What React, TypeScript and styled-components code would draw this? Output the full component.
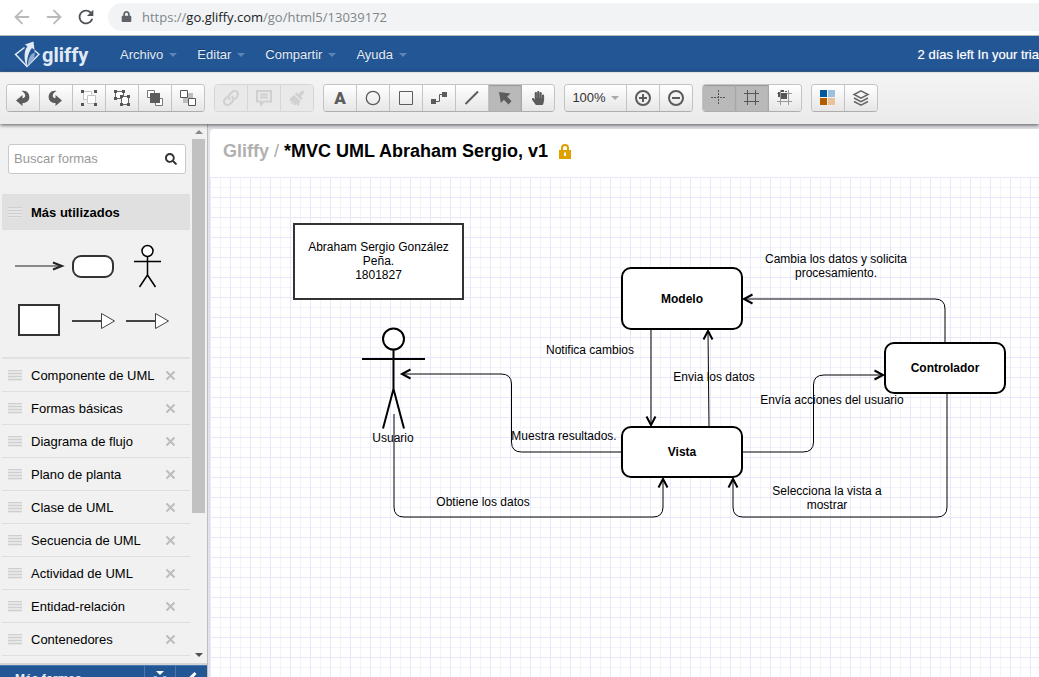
import React from "react";
import styled, { createGlobalStyle, css } from "styled-components";
import { ArrowLeft, ArrowRight } from "lucide-react";
import { FaHandPaper, FaLock, FaSearch } from "react-icons/fa";
import { MdRefresh } from "react-icons/md";

const GlobalStyle = createGlobalStyle`
  * { box-sizing: border-box; }
  body { margin: 0; overflow: hidden; font-family: "Liberation Sans", Arial, sans-serif; font-size: 13px; color: #000; }
  button { font: inherit; color: inherit; padding: 0; margin: 0; border: 0; background: none; cursor: pointer; }
  svg { display: block; }
`;

const Page = styled.div`
  display: flex;
  flex-direction: column;
  height: 100vh;
  background: #fff;
`;

/* Browser chrome */

const BrowserBar = styled.div`
  flex: none;
  display: flex;
  align-items: center;
  height: 36px;
  padding: 0 0 2px 12px;
  background: #fff;
  border-bottom: 1px solid #b6babd;
`;

const NavButton = styled.button<{ $dim?: boolean }>`
  display: flex;
  justify-content: center;
  width: 20px;
  margin-right: 12px;
  color: ${(p) => (p.$dim ? "#bababa" : "#4f5256")};
  svg { flex: none; }
`;

const AddressPill = styled.div`
  flex: 1;
  display: flex;
  align-items: center;
  gap: 10px;
  height: 28px;
  padding-left: 13px;
  background: #f1f3f4;
  border-radius: 14px 0 0 14px;
  color: #5f6368;
  font: 13px/20px "Open Sans", "Noto Sans", sans-serif;

  span { color: #80868b; }
  b { font-weight: 400; color: #202124; }
`;

/* Application header */

const Header = styled.header`
  flex: none;
  display: flex;
  align-items: center;
  height: 36px;
  padding: 2px 0 0 14px;
  background: #225695;
  border-bottom: 1px solid #3f689b;
  overflow: hidden;
`;

const Logo = styled.a`
  display: flex;
  align-items: center;
  gap: 2px;
  width: 106px;
  color: #e1eaf4;
  text-decoration: none;
  font: bold 20px/28px Roboto, "Liberation Sans", sans-serif;
`;

const MenuBar = styled.nav`
  flex: 1;
  display: flex;
  gap: 20px;
`;

const MenuItem = styled.button`
  display: flex;
  align-items: center;
  gap: 6px;
  line-height: 16px;
  color: #e3ecf5;
  text-shadow: 0 -1px 0 #173f70;
`;

const Caret = styled.span<{ $color: string }>`
  border: 4px solid transparent;
  border-top-color: ${(p) => p.$color};
  border-bottom-width: 0;
`;

const Trial = styled.span`
  white-space: nowrap;
  color: #fff;
  text-shadow: 0 0 1px rgba(255, 255, 255, 0.5);
`;

/* Toolbar */

const Toolbar = styled.div`
  flex: none;
  position: relative;
  z-index: 1;
  display: flex;
  align-items: center;
  gap: 9px;
  height: 52px;
  padding: 0 6px 2px;
  background: linear-gradient(#f4f4f4, #ebebeb);
  border-top: 1px solid #e2e2e2;
  box-shadow: 0 1px 4px rgba(0, 0, 0, 0.65);
`;

const ToolGroup = styled.div<{ $disabled?: boolean }>`
  display: flex;
  height: 28px;
  border: 1px solid ${(p) => (p.$disabled ? "#d6d6d6" : "#c4c4c4")};
  border-bottom-color: ${(p) => (p.$disabled ? "#d6d6d6" : "#adadad")};
  border-radius: 4px;
  overflow: hidden;
`;

const ToolButton = styled.button<{ $active?: boolean; $wide?: boolean }>`
  display: flex;
  align-items: center;
  justify-content: center;
  gap: 5px;
  width: ${(p) => (p.$wide ? 62 : 33)}px;
  color: #5c5c5c;
  background: linear-gradient(#fff, #e6e6e6);
  border-right: 1px solid #c4c4c4;

  &:last-child { width: 32px; border-right: 0; }
  &:disabled { color: #d0d0d0; background: #e9e9e9; border-color: #d6d6d6; }

  ${(p) =>
    p.$active &&
    css`
      background: #b9b9b9;
      border-color: #a6a6a6;
      box-shadow: inset 0 1px 1px #999;
    `}
`;

const LetterA = styled.span`
  font: 900 17px/20px Roboto, "Liberation Sans", sans-serif;
`;

const ZoomValue = styled.span`
  font-size: 13px;
  color: #333;
`;

/* Body */

const Body = styled.div`
  flex: 1;
  min-height: 0;
  display: flex;
  background: #e2e2e8;
`;

const Sidebar = styled.aside`
  flex: none;
  display: flex;
  flex-direction: column;
  width: 208px;
  background: #f1f1f1;
  border-right: 1px solid #bdbdbd;
`;

const Library = styled.div`
  flex: 1;
  min-height: 0;
  display: flex;
  overflow: hidden;
`;

const LibraryContent = styled.div`
  flex: 1;
  min-width: 0;
  padding: 20px 0 0 2px;
`;

const SearchBox = styled.label`
  display: flex;
  align-items: center;
  height: 30px;
  margin: 0 4px 20px 6px;
  padding: 0 8px 1px 5px;
  background: #fff;
  border: 1px solid #c9c9c9;
  border-radius: 3px;
  color: #333;

  input {
    flex: 1;
    min-width: 0;
    padding: 0;
    border: 0;
    outline: 0;
    background: none;
    font: inherit;
  }
  input::placeholder { color: #999; opacity: 1; }
`;

const Grip = styled.span`
  flex: none;
  width: 14px;
  height: 11px;
  margin-right: 9px;
  background: repeating-linear-gradient(#cfcfcf 0 1px, #e6e6e6 1px 3px);
`;

const SectionTitle = styled.h2`
  display: flex;
  align-items: center;
  height: 36px;
  margin: 0;
  padding-left: 6px;
  background: #e0e0e0;
  font-size: 13px;
`;

const Palette = styled.div`
  display: grid;
  grid-template-columns: repeat(3, 54px);
  grid-auto-rows: 54px;
  padding: 9px 0 10px 10px;
`;

const Rows = styled.ul`
  margin: 0;
  padding: 0;
  list-style: none;
  border-top: 2px solid #e2e2e2;
`;

const Row = styled.li`
  display: flex;
  align-items: center;
  height: 33px;
  padding: 0 14px 0 6px;
  border-bottom: 1px solid #dfdfdf;
  span:nth-child(2) { flex: 1; }
`;

const ScrollTrack = styled.div`
  flex: none;
  display: flex;
  flex-direction: column;
  align-items: center;
  width: 17px;
  padding: 6px 0;
`;

const ScrollThumb = styled.div`
  flex: 0 0 71%;
  width: 13px;
  margin-top: 5px;
  background: #c1c1c1;
`;

const ScrollArrow = styled.span<{ $up?: boolean }>`
  border: 4px solid transparent;
  ${(p) =>
    p.$up
      ? "border-bottom-color: #8a8a8a; border-top-width: 0;"
      : "border-top-color: #505050; border-bottom-width: 0; margin-top: auto;"}
`;

const SidebarFooter = styled.footer`
  flex: 0 0 14px;
  display: flex;
  align-items: flex-start;
  border-top: 2px solid #d4d4d4;
  overflow: hidden;
  background: #225695;
`;

const FooterButton = styled.button<{ $grow?: boolean }>`
  flex: ${(p) => (p.$grow ? "1" : "0 0 31px")};
  display: flex;
  justify-content: ${(p) => (p.$grow ? "flex-start" : "center")};
  align-items: center;
  height: 27px;
  padding-left: ${(p) => (p.$grow ? 15 : 0)}px;
  border-top: 1px solid #4a77ad;
  border-right: 1px solid #4a77ad;
  color: #e3ecf5;
  font-size: 12px;
  font-weight: bold;
  &:last-child { border-right: 0; }
`;

const Document = styled.main`
  flex: 1;
  min-width: 0;
  display: flex;
  flex-direction: column;
  margin: 5px 0 0 2px;
  background: #fff;
  border-radius: 4px 0 0 0;
`;

const DocumentTitle = styled.h1`
  flex: none;
  display: flex;
  align-items: center;
  gap: 5px;
  height: 48px;
  margin: 0;
  padding: 0 0 4px 13px;
  font-size: 18px;
  white-space: nowrap;

  a { color: #b0b0b0; text-decoration: none; }
  i { color: #aaa; font-style: normal; font-weight: 400; }
  svg { margin-left: 6px; }
`;

/* Free drawing surface: nodes and labels sit at their own coordinates. */
const Stage = styled.section`
  flex: 1;
  position: relative;
  overflow: hidden;
  background-color: #fff;
  background-image:
    linear-gradient(#e8e8fd 1px, transparent 1px),
    linear-gradient(90deg, #e8e8fd 1px, transparent 1px),
    linear-gradient(#f3f3fc 1px, transparent 1px),
    linear-gradient(90deg, #f3f3fc 1px, transparent 1px);
  background-size: 20px 20px, 20px 20px, 10px 10px, 10px 10px;
`;

const Connectors = styled.svg`
  position: absolute;
  left: 0;
  top: 0;
  overflow: visible;
`;

const Node = styled.div<{ $x: number; $y: number; $w: number; $h: number; $plain?: boolean }>`
  position: absolute;
  left: ${(p) => p.$x}px;
  top: ${(p) => p.$y}px;
  width: ${(p) => p.$w}px;
  height: ${(p) => p.$h}px;
  display: flex;
  align-items: center;
  justify-content: center;
  padding-bottom: ${(p) => (p.$plain ? 2 : 0)}px;
  background: #fff;
  border: 2px solid ${(p) => (p.$plain ? "#333" : "#000")};
  border-radius: ${(p) => (p.$plain ? 0 : 10)}px;
  font-size: 12px;
  line-height: 14px;
  font-weight: ${(p) => (p.$plain ? 400 : 700)};
  text-align: center;
  white-space: pre;
`;

const Label = styled.div<{ $x: number; $y: number }>`
  position: absolute;
  left: ${(p) => p.$x - 80}px;
  top: ${(p) => p.$y}px;
  width: 160px;
  font-size: 12px;
  line-height: 14px;
  text-align: center;
  white-space: pre;
`;

const ToolIcon = ({ children }: { children: React.ReactNode }) => (
  <svg width="32" height="26" viewBox="0 0 32 26" fill="none" aria-hidden="true">
    {children}
  </svg>
);

const undoPath =
  "M9 15.5 L15.5 10 V13.3 C19.3 12.8 19.3 8.5 14.5 6 C20 5 22.8 9 22.3 13 C21.8 16.3 19 18 15.5 18 V21 Z";

const Handles = ({ at }: { at: [number, number][] }) => (
  <g fill="#555">
    {at.map(([x, y]) => (
      <rect key={`${x}-${y}`} x={x} y={y} width="3" height="3" />
    ))}
  </g>
);

type Tool = { name: string; icon: React.ReactNode; active?: boolean; wide?: boolean };
type Group = { disabled?: boolean; tools: Tool[] };

const magnifier = (
  <circle cx="16" cy="13" r="7" stroke="#5c5c5c" strokeWidth="2" />
);

const groups: Group[] = [
  {
    tools: [
      { name: "Deshacer", icon: <ToolIcon><path d={undoPath} fill="#5c5c5c" /></ToolIcon> },
      {
        name: "Rehacer",
        icon: <ToolIcon><path d={undoPath} fill="#5c5c5c" transform="matrix(-1 0 0 1 31 0)" /></ToolIcon>,
      },
      {
        name: "Agrupar",
        icon: (
          <ToolIcon>
            <g fill="#fff" stroke="#c6c6c6"><path d="M10.500 6.500h8v8h-8z" /><path d="M14.500 10.500h8v8h-8z" /></g>
            <Handles at={[[8, 5], [21, 5], [8, 18], [21, 18]]} />
          </ToolIcon>
        ),
      },
      {
        name: "Desagrupar",
        icon: (
          <ToolIcon>
            <g fill="#fff" stroke="#666"><path d="M9.500 6.500h8v7h-8z" /><path d="M15.500 11.500h7v8h-7z" /></g>
            <Handles at={[[8, 5], [16, 5], [8, 12], [14, 10], [21, 10], [14, 18], [21, 18]]} />
          </ToolIcon>
        ),
      },
      {
        name: "Traer al frente",
        icon: (
          <ToolIcon>
            <path d="M8.500 5.500h7v7h-7zM16.500 13.500h7v7h-7z" fill="#fff" stroke="#777" />
            <path d="M11 8h10v10H11z" fill="#5c5c5c" />
          </ToolIcon>
        ),
      },
      {
        name: "Enviar atrás",
        icon: (
          <ToolIcon>
            <path d="M11 8h10v10H11z" fill="#bdbdbd" />
            <path d="M8.500 5.500h7v7h-7zM16.500 13.500h7v7h-7z" fill="#fff" stroke="#555" />
          </ToolIcon>
        ),
      },
    ],
  },
  {
    disabled: true,
    tools: [
      {
        name: "Enlace",
        icon: (
          <ToolIcon>
            <g transform="rotate(-45 16 13)" stroke="#d0d0d0" strokeWidth="2">
              <path d="M14.500 9.500H11a3.500 3.500 0 0 0 0 7h3.500a3.500 3.500 0 0 0 3.200-4.500" />
              <path d="M17.500 16.500H21a3.500 3.500 0 0 0 0-7h-3.500a3.500 3.500 0 0 0-3.200 4.500" />
            </g>
          </ToolIcon>
        ),
      },
      {
        name: "Comentario",
        icon: (
          <ToolIcon>
            <path d="M9 6h14v10.500h-7l-3 3v-3H9zM12 9.500h8M12 12.500h8" stroke="#d0d0d0" strokeWidth="2" />
          </ToolIcon>
        ),
      },
      {
        name: "Copiar formato",
        icon: (
          <ToolIcon>
            <g fill="#d0d0d0">
              <path d="M21.500 5.300l2 1.800-3.700 4.600 1.700 1.700-1.500 1.600-6.200-5.900 1.600-1.500 2 1.600z" />
              <path d="M13 10l6 5.800-1 4.700-2.300 0 .8-2.500-2.300 2.300-2-.7 1.600-2.400-2.600 1.700-1.900-1.500 2.400-1.500-3 .1.200-2.400z" />
            </g>
          </ToolIcon>
        ),
      },
    ],
  },
  {
    tools: [
      { name: "Texto", icon: <LetterA>A</LetterA> },
      {
        name: "Elipse",
        icon: <ToolIcon><circle cx="16" cy="13" r="6.700" stroke="#5c5c5c" strokeWidth="1.300" /></ToolIcon>,
      },
      {
        name: "Rectángulo",
        icon: <ToolIcon><path d="M9.500 6.500h13v13h-13z" stroke="#5c5c5c" /></ToolIcon>,
      },
      {
        name: "Conector",
        icon: (
          <ToolIcon>
            <path d="M8 14h5v5H8zM19 7h5v5h-5z" fill="#5c5c5c" />
            <path d="M13 16.500h3.500v-7H19" stroke="#5c5c5c" />
          </ToolIcon>
        ),
      },
      {
        name: "Línea",
        icon: <ToolIcon><path d="M9.500 19 22 6.500" stroke="#5c5c5c" strokeWidth="2" /></ToolIcon>,
      },
      {
        name: "Seleccionar",
        active: true,
        icon: (
          <ToolIcon>
            <path d="M10 7l11.500 1.500-3.300 3.200 4.300 4.300-3 3.500-4.600-4.700-3 3.200z" fill="#5c5c5c" />
          </ToolIcon>
        ),
      },
      { name: "Mover", icon: <FaHandPaper size={14} /> },
    ],
  },
  {
    tools: [
      { name: "Nivel de zoom", wide: true, icon: <><ZoomValue>100%</ZoomValue><Caret $color="#aaa" /></> },
      {
        name: "Acercar",
        icon: <ToolIcon>{magnifier}<path d="M12 13h8M16 9v8" stroke="#5c5c5c" strokeWidth="2" /></ToolIcon>,
      },
      {
        name: "Alejar",
        icon: <ToolIcon>{magnifier}<path d="M12 13h8" stroke="#5c5c5c" strokeWidth="2" /></ToolIcon>,
      },
    ],
  },
  {
    tools: [
      {
        name: "Guías",
        active: true,
        icon: (
          <ToolIcon>
            <path d="M8 12.500h15M15.500 5v15" stroke="#555" strokeDasharray="2 1" />
          </ToolIcon>
        ),
      },
      {
        name: "Cuadrícula",
        active: true,
        icon: <ToolIcon><path d="M8 8.500h15M8 16.500h15M11.500 5v15M19.500 5v15" stroke="#555" /></ToolIcon>,
      },
      {
        name: "Ajustar a la cuadrícula",
        icon: (
          <ToolIcon>
            <path d="M8 8.500h15M8 16.500h15M11.500 5v15M19.500 5v15" stroke="#999" />
            <path d="M12 8h6v6h-6zM9 7h2v5H9zM12 5h3v2h-3zM16 6h2v1h-2z" fill="#555" />
          </ToolIcon>
        ),
      },
    ],
  },
  {
    tools: [
      {
        name: "Tema",
        icon: (
          <ToolIcon>
            <path d="M8 5h7v7H8z" fill="#015a9e" />
            <path d="M16 5h7v7h-7z" fill="#9cc1dc" />
            <path d="M8 13h7v7H8z" fill="#b65b00" />
            <path d="M16 13h7v7h-7z" fill="#e8c298" />
          </ToolIcon>
        ),
      },
      {
        name: "Capas",
        icon: (
          <ToolIcon>
            <g stroke="#666" strokeWidth="1.500">
              <path d="M16 5.800 23 9.500 16 13.200 9 9.500z" />
              <path d="M9 13l7 3.700 7-3.700M9 16.500l7 3.700 7-3.700" />
            </g>
          </ToolIcon>
        ),
      },
    ],
  },
];

const menus = ["Archivo", "Editar", "Compartir", "Ayuda"];

const libraries = [
  "Componente de UML",
  "Formas básicas",
  "Diagrama de flujo",
  "Plano de planta",
  "Clase de UML",
  "Secuencia de UML",
  "Actividad de UML",
  "Entidad-relación",
  "Contenedores",
];

const generalization = (
  <>
    <path d="M6 28h30" stroke="#444" strokeWidth="2" />
    <path d="M35.500 20.500v15l13-7.500z" fill="#fff" stroke="#444" />
  </>
);

const shapes: { name: string; drawing: React.ReactNode }[] = [
  {
    name: "Flecha",
    drawing: (
      <>
        <path d="M3 27h47" stroke="#666" strokeWidth="1.500" />
        <path d="M41 23.500l9 3.500-9 3.500" stroke="#222" strokeWidth="2" fill="none" />
      </>
    ),
  },
  {
    name: "Rectángulo redondeado",
    drawing: <rect x="7" y="17" width="40" height="21" rx="8" fill="#fff" stroke="#333" strokeWidth="2" />,
  },
  {
    name: "Actor",
    drawing: (
      <g stroke="#000" strokeWidth="1.500" fill="none">
        <circle cx="27.500" cy="12" r="5.500" fill="#fff" />
        <path d="M27.500 17.500V36M14 22.500h27M27.500 36l-8 12M27.500 36l8 12" />
      </g>
    ),
  },
  {
    name: "Rectángulo",
    drawing: <rect x="7" y="12" width="40" height="30" fill="#fff" stroke="#333" strokeWidth="2" />,
  },
  { name: "Generalización", drawing: generalization },
  { name: "Realización", drawing: generalization },
];

/* Connector routes and the arrow tips that end them, in stage coordinates. */
const routes = [
  "M411 275H311.500Q301.500 275 301.500 265V207Q301.500 197 291 197H193",
  "M184 237V330Q184 340 194 340H443Q453 340 453 330V303",
  "M441 153V248",
  "M499 249L498 155",
  "M533 275H593Q603.500 275 603.500 265V208Q603.500 198 614 198H673",
  "M735 165V132Q735 122 725 122H535",
  "M737 215V330Q737 340 727 340H533Q523 340 523 330V303",
];

const tips = [
  "M200.500 192.500L192 197L200.500 201.500",
  "M448.500 310.500L453 302L457.500 310.500",
  "M436.500 239.500L441 248L445.500 239.500",
  "M493.500 162.500L498 154L502.500 162.500",
  "M664.500 193.500L673 198L664.500 202.500",
  "M542.500 117.500L534 122L542.500 126.500",
  "M518.500 310.500L523 302L527.500 310.500",
];

const labels: { x: number; y: number; text: string }[] = [
  { x: 183, y: 254, text: "Usuario" },
  { x: 380, y: 166, text: "Notifica cambios" },
  { x: 504, y: 193, text: "Envia los datos" },
  { x: 622, y: 216, text: "Envía acciones del usuario" },
  { x: 354, y: 252, text: "Muestra resultados." },
  { x: 273, y: 318, text: "Obtiene los datos" },
  { x: 617, y: 307, text: "Selecciona la vista a\nmostrar" },
  { x: 626, y: 75, text: "Cambia los datos y solicita\nprocesamiento." },
];

const GliffyMark = () => (
  <svg width="26" height="28" viewBox="0 0 26 28" aria-hidden="true">
    <path d="M10.500 6.500 1.500 13.300 13 25.500 25 13.300 20.500 9.500" fill="none" stroke="#e1eaf4" strokeWidth="1.500" />
    <path d="M12.800 26C9.500 18 10 9 13.500 5.500L11 3.500 19.500.500 20.500 9 18 7C14.500 11 13 17 12.800 26z" fill="#e1eaf4" />
    <path d="M13.500 25C14 18 16 13 21 11.500L20 18z" fill="#8fadd0" />
  </svg>
);

export default function App() {
  return (
    <Page>
      <GlobalStyle />
      <BrowserBar>
        <NavButton $dim aria-label="Atrás"><ArrowLeft size={22} strokeWidth={2} /></NavButton>
        <NavButton $dim aria-label="Adelante"><ArrowRight size={22} strokeWidth={2} /></NavButton>
        <NavButton aria-label="Recargar"><MdRefresh size={22} /></NavButton>
        <AddressPill>
          <FaLock size={11} />
          <span>https://<b>go.gliffy.com</b>/go/html5/13039172</span>
        </AddressPill>
      </BrowserBar>

      <Header>
        <Logo href="#"><GliffyMark />gliffy</Logo>
        <MenuBar>
          {menus.map((m) => (
            <MenuItem key={m}>{m}<Caret $color="#5d86b8" /></MenuItem>
          ))}
        </MenuBar>
        <Trial>2 días left In your tria</Trial>
      </Header>

      <Toolbar role="toolbar">
        {groups.map((g, i) => (
          <ToolGroup key={i} $disabled={g.disabled}>
            {g.tools.map((t) => (
              <ToolButton key={t.name} aria-label={t.name} disabled={g.disabled} $active={t.active} $wide={t.wide}>
                {t.icon}
              </ToolButton>
            ))}
          </ToolGroup>
        ))}
      </Toolbar>

      <Body>
        <Sidebar>
          <Library>
            <LibraryContent>
              <SearchBox>
                <input type="text" placeholder="Buscar formas" aria-label="Buscar formas" />
                <FaSearch size={12} />
              </SearchBox>
              <SectionTitle><Grip />Más utilizados</SectionTitle>
              <Palette>
                {shapes.map((s) => (
                  <button key={s.name} aria-label={s.name}>
                    <svg width="54" height="54" viewBox="0 0 54 54" fill="none">{s.drawing}</svg>
                  </button>
                ))}
              </Palette>
              <Rows>
                {libraries.map((name) => (
                  <Row key={name}>
                    <Grip />
                    <span>{name}</span>
                    <button aria-label={`Cerrar ${name}`}>
                      <svg width="11" height="11" viewBox="0 0 11 11">
                        <path d="M1.500 1.500l8 8M9.500 1.500l-8 8" stroke="#bdbdbd" strokeWidth="2" />
                      </svg>
                    </button>
                  </Row>
                ))}
              </Rows>
            </LibraryContent>
            <ScrollTrack>
              <ScrollArrow $up />
              <ScrollThumb />
              <ScrollArrow />
            </ScrollTrack>
          </Library>
          <SidebarFooter>
            <FooterButton $grow>Más formas</FooterButton>
            <FooterButton aria-label="Importar">
              <svg width="14" height="16" viewBox="0 0 14 16" fill="none">
                <path d="M3 0h8L7 4z" fill="#fff" />
                <path d="M4 5.500H1V14h12V5.500h-3" stroke="#9db9d9" />
              </svg>
            </FooterButton>
            <FooterButton aria-label="Contraer">
              <svg width="10" height="16" viewBox="0 0 10 16" fill="none">
                <path d="M8.500 2L2.500 8l6 6" stroke="#fff" strokeWidth="3" />
              </svg>
            </FooterButton>
          </SidebarFooter>
        </Sidebar>

        <Document>
          <DocumentTitle>
            <a href="#">Gliffy</a>
            <i>/</i>
            <span>*MVC UML Abraham Sergio, v1</span>
            <svg width="12" height="15" viewBox="0 0 12 15" fill="none">
              <path d="M3 7V4a3 3 0 0 1 6 0v3" stroke="#e0a100" strokeWidth="2" />
              <path d="M0 6h12v9H0z" fill="#e0a100" />
              <path d="M5 8.500h2v3.500H5z" fill="#fff" />
            </svg>
          </DocumentTitle>
          <Stage>
            <Node $plain $x={83} $y={46} $w={171} $h={77}>{"Abraham Sergio González\nPeña.\n1801827"}</Node>
            <Node $x={411} $y={90} $w={122} $h={63}>Modelo</Node>
            <Node $x={411} $y={249} $w={122} $h={52}>Vista</Node>
            <Node $x={674} $y={165} $w={122} $h={52}>Controlador</Node>
            <Connectors width="829" height="500" fill="none" stroke="#000">
              <g strokeWidth="2">
                <circle cx="183.500" cy="162" r="10.500" fill="#fff" />
                <path d="M183.500 172.500V212M152 182h63M183.500 212L173 251.500M183.500 212l10.500 39.500" />
              </g>
              {routes.map((d) => <path key={d} d={d} />)}
              {tips.map((d) => <path key={d} d={d} strokeWidth="2" />)}
            </Connectors>
            {labels.map((l) => (
              <Label key={l.text} $x={l.x} $y={l.y}>{l.text}</Label>
            ))}
          </Stage>
        </Document>
      </Body>
    </Page>
  );
}
